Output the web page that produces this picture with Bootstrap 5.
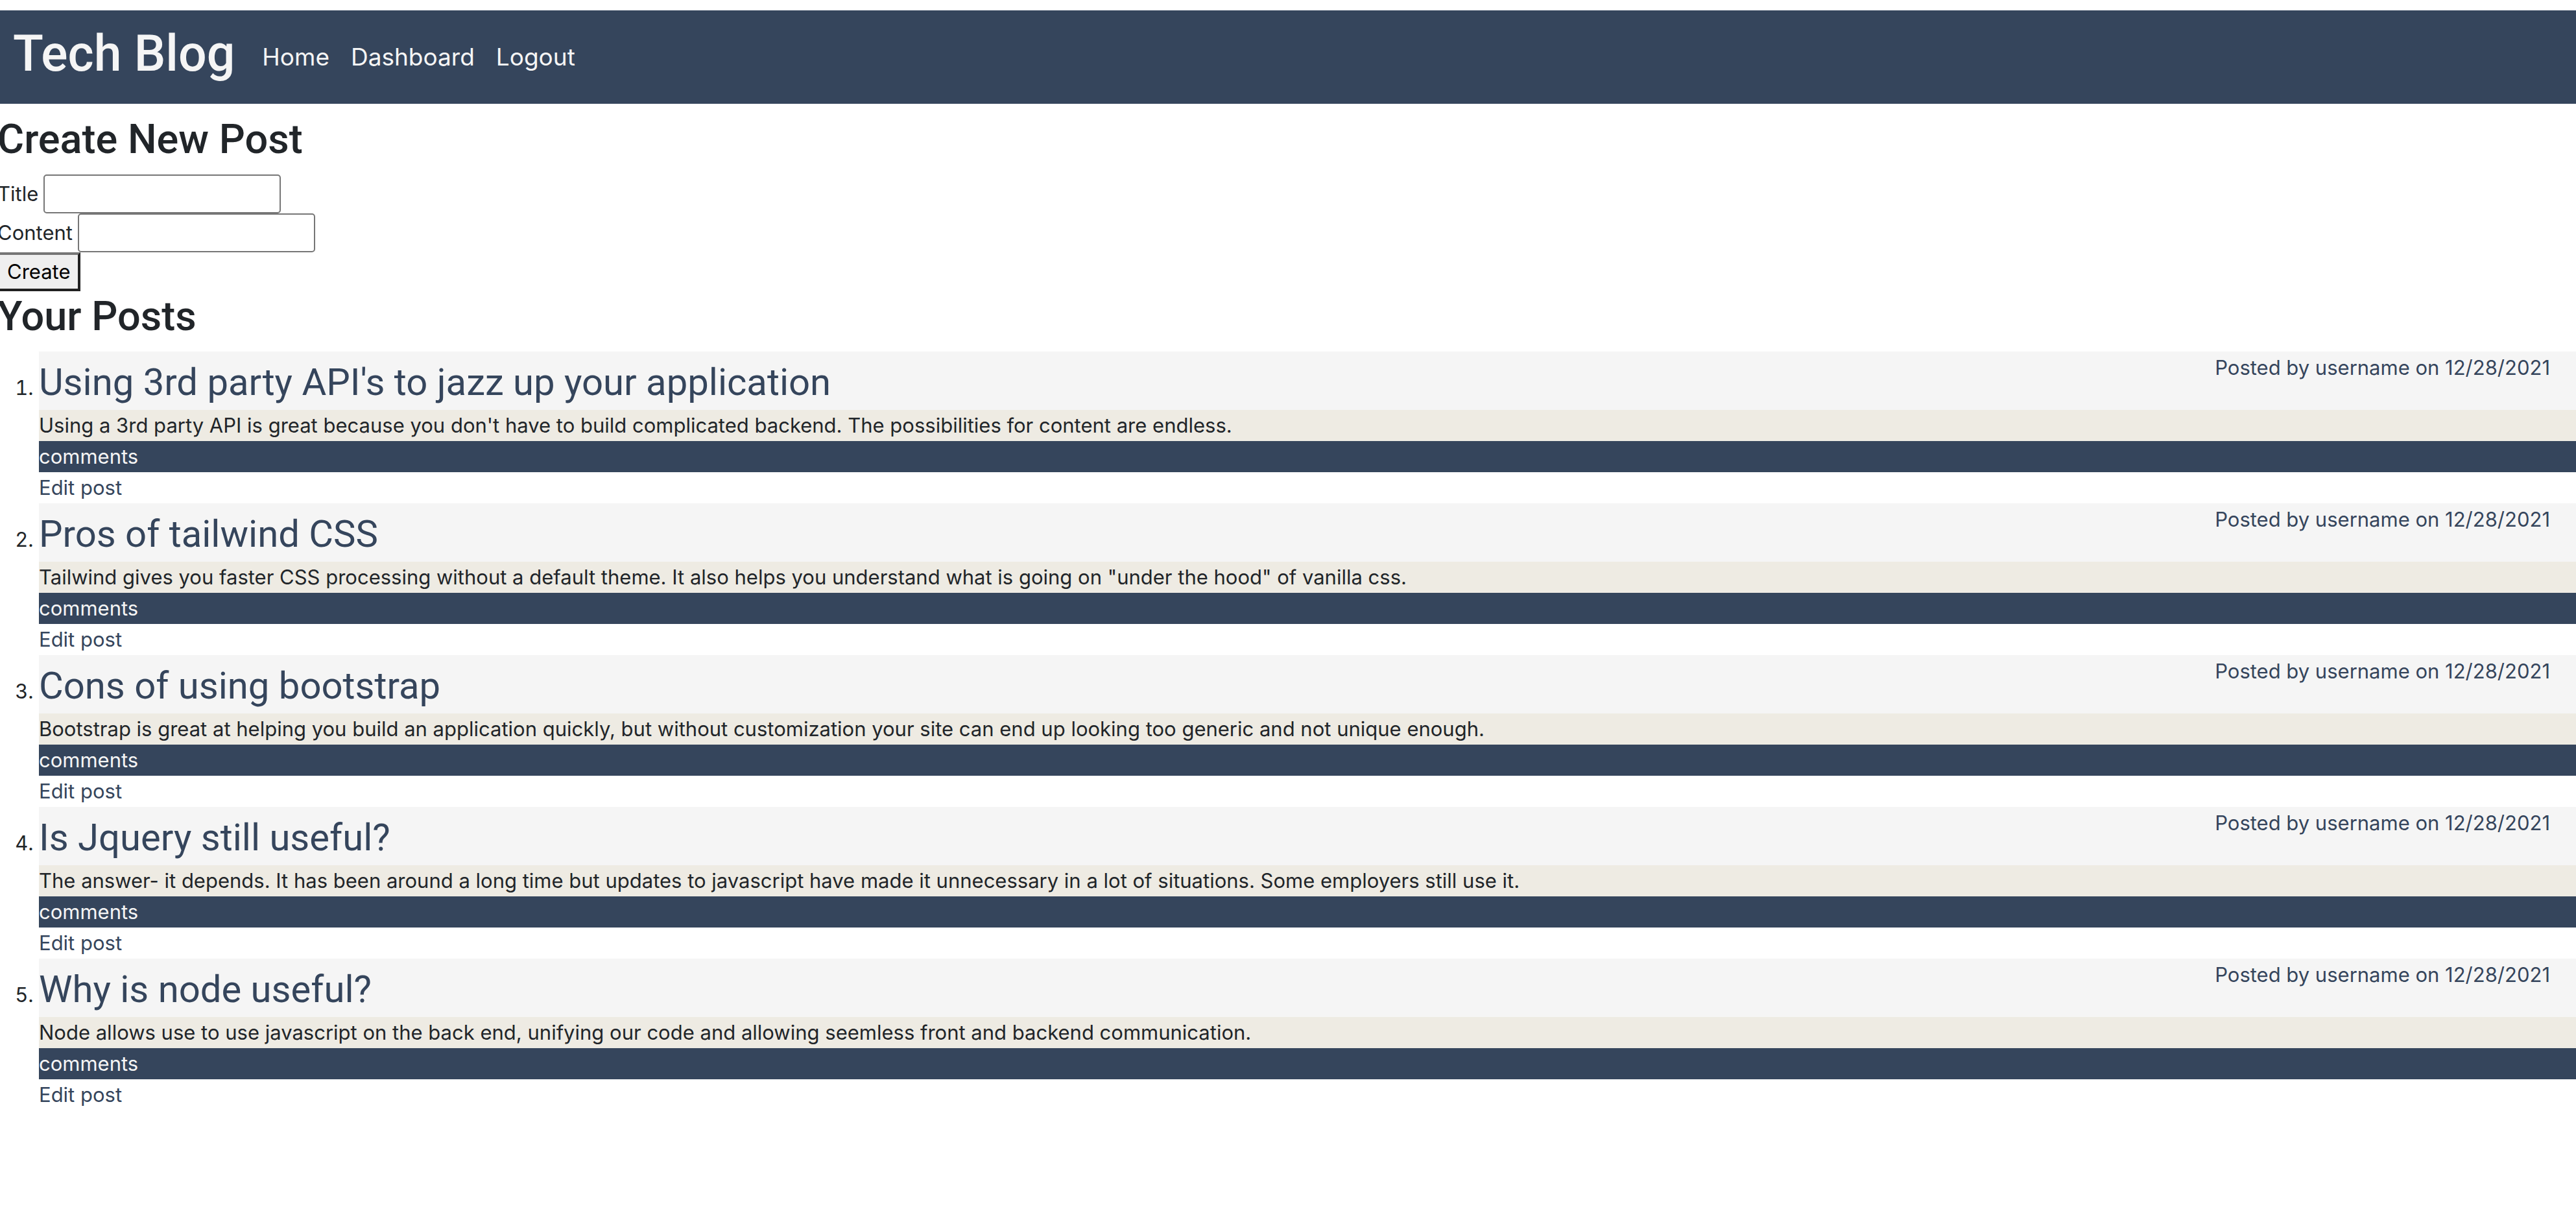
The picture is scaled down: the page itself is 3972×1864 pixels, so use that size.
<!DOCTYPE html>
<html lang="en">
<head>
<meta charset="utf-8">
<meta name="viewport" content="width=device-width, initial-scale=1">
<title>Tech Blog</title>
<link href="https://cdn.jsdelivr.net/npm/bootstrap@5.3.0/dist/css/bootstrap.min.css" rel="stylesheet">
<style>
  :root { --navy: #35455c; --smoke: #f5f5f5; --linen: #eeebe3; }
  html { font-size: 32px; }
  body { font-family: Inter, "Liberation Sans", sans-serif; font-size: 31px; line-height: 48px; overflow-x: hidden; }
  .page-shell { margin-left: -4px; }
  .site-nav { background: var(--navy); padding: 16px 24px; gap: 42px; }
  .site-nav a { color: var(--smoke); }
  .site-nav h1 { font-family: Roboto, sans-serif; font-size: 77px; line-height: 102px; margin-bottom: 10px; }
  .nav-items { font-size: 37px; line-height: 60px; gap: 33px; }
  .section-title { font-family: Roboto, sans-serif; font-size: 63px; line-height: 77px; }
  .field-row { height: 60px; gap: 8px; }
  .field-row input { width: 366px; height: 60px; border: 2px solid #767676; border-radius: 5px; padding: 2px 4px; }
  .create-btn { display: block; height: 60px; padding: 0 11px; background: #efefef; color: #000; border: 4px solid; border-color: #767676 #212121 #212121 #767676; }
  .post-list { padding-left: 64px; }
  .post-head { background: var(--smoke); font-family: Roboto, sans-serif; font-size: 58px; line-height: 86px; padding-top: 4px; }
  .post-title { color: var(--navy); }
  .post-date { color: var(--navy); font-family: Inter, sans-serif; font-size: 31px; line-height: 42px; margin-right: 40px; }
  .post-body { background: var(--linen); }
  .post-comments { background: var(--navy); color: var(--smoke); }
  .edit-link { color: var(--navy); }
</style>
</head>
<body>
<div class="page-shell pt-2">
  <nav class="site-nav d-flex align-items-center">
    <h1><a class="text-decoration-none" href="#">Tech Blog</a></h1>
    <div class="nav-items d-flex">
      <a class="text-decoration-none" href="#">Home</a>
      <a class="text-decoration-none" href="#">Dashboard</a>
      <a class="text-decoration-none" href="#">Logout</a>
    </div>
  </nav>

  <main>
    <h2 class="section-title mt-2 mb-2">Create New Post</h2>
    <form>
      <div class="field-row d-flex align-items-center">
        <label for="post-title">Title</label>
        <input type="text" id="post-title" name="title">
      </div>
      <div class="field-row d-flex align-items-center">
        <label for="post-content">Content</label>
        <input type="text" id="post-content" name="content">
      </div>
      <button type="submit" class="create-btn">Create</button>
    </form>

    <h2 class="section-title mb-2">Your Posts</h2>
    <ol class="post-list mb-0">
      <li>
        <div class="post-head">
          <span class="post-date float-end">Posted by username on 12/28/2021</span>
          <a class="post-title text-decoration-none" href="#">Using 3rd party API's to jazz up your application</a>
        </div>
        <div class="post-body">Using a 3rd party API is great because you don't have to build complicated backend. The possibilities for content are endless.</div>
        <div class="post-comments">comments</div>
        <a class="edit-link text-decoration-none" href="#">Edit post</a>
      </li>
      <li>
        <div class="post-head">
          <span class="post-date float-end">Posted by username on 12/28/2021</span>
          <a class="post-title text-decoration-none" href="#">Pros of tailwind CSS</a>
        </div>
        <div class="post-body">Tailwind gives you faster CSS processing without a default theme. It also helps you understand what is going on "under the hood" of vanilla css.</div>
        <div class="post-comments">comments</div>
        <a class="edit-link text-decoration-none" href="#">Edit post</a>
      </li>
      <li>
        <div class="post-head">
          <span class="post-date float-end">Posted by username on 12/28/2021</span>
          <a class="post-title text-decoration-none" href="#">Cons of using bootstrap</a>
        </div>
        <div class="post-body">Bootstrap is great at helping you build an application quickly, but without customization your site can end up looking too generic and not unique enough.</div>
        <div class="post-comments">comments</div>
        <a class="edit-link text-decoration-none" href="#">Edit post</a>
      </li>
      <li>
        <div class="post-head">
          <span class="post-date float-end">Posted by username on 12/28/2021</span>
          <a class="post-title text-decoration-none" href="#">Is Jquery still useful?</a>
        </div>
        <div class="post-body">The answer- it depends. It has been around a long time but updates to javascript have made it unnecessary in a lot of situations. Some employers still use it.</div>
        <div class="post-comments">comments</div>
        <a class="edit-link text-decoration-none" href="#">Edit post</a>
      </li>
      <li>
        <div class="post-head">
          <span class="post-date float-end">Posted by username on 12/28/2021</span>
          <a class="post-title text-decoration-none" href="#">Why is node useful?</a>
        </div>
        <div class="post-body">Node allows use to use javascript on the back end, unifying our code and allowing seemless front and backend communication.</div>
        <div class="post-comments">comments</div>
        <a class="edit-link text-decoration-none" href="#">Edit post</a>
      </li>
    </ol>
  </main>
</div>
<script src="https://cdn.jsdelivr.net/npm/bootstrap@5.3.0/dist/js/bootstrap.bundle.min.js"></script>
</body>
</html>
